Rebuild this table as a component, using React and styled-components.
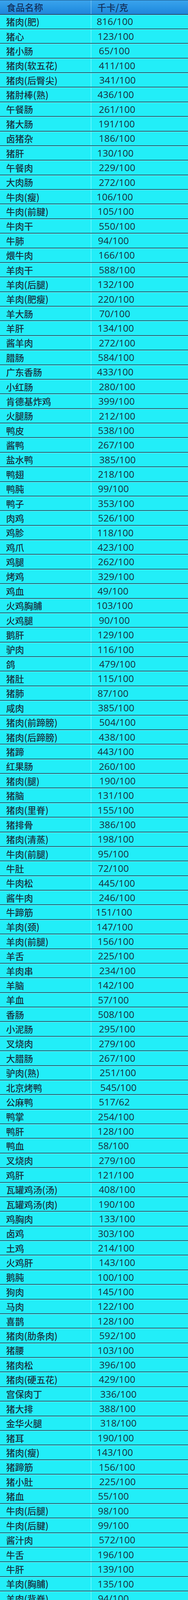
import React from "react";
import styled, { createGlobalStyle } from "styled-components";

const Global = createGlobalStyle`
  html, body { margin: 0; padding: 0; background: #22eef8; }
  body { font-family: "Noto Sans CJK SC", "Noto Sans", sans-serif; }
`;

const DATA = `猪肉(肥)|816/100|745
猪心|123/100|755
猪小肠|65/100|762
猪肉(软五花)|411/100|762
猪肉(后臀尖)|341/100|765
猪肘棒(熟)|436/100|752
午餐肠|261/100|762
猪大肠|191/100|762
卤猪杂|186/100|765
猪肝|130/100|752
午餐肉|229/100|762
大肉肠|272/100|762
牛肉(瘦)|106/100|748
牛肉(前腱)|105/100|755
牛肉干|550/100|762
牛肺|94/100|755
煨牛肉|166/100|762
羊肉干|588/100|762
羊肉(后腿)|132/100|755
羊肉(肥瘦)|220/100|755
羊大肠|70/100|765
羊肝|134/100|755
酱羊肉|272/100|762
腊肠|584/100|755
广东香肠|433/100|748
小红肠|280/100|762
肯德基炸鸡|399/100|758
火腿肠|212/100|762
鸭皮|538/100|755
酱鸭|267/100|755
盐水鸭|385/100|765
鸭翅|218/100|755
鸭肫|99/100|755
鸭子|353/100|755
肉鸡|526/100|755
鸡胗|118/100|752
鸡爪|423/100|752
鸡腿|262/100|755
烤鸡|329/100|755
鸡血|49/100|752
火鸡胸脯|103/100|748
火鸡腿|90/100|762
鹅肝|129/100|755
驴肉|116/100|755
鸽|479/100|765
猪肚|115/100|755
猪肺|87/100|752
咸肉|385/100|755
猪肉(前蹄膀)|504/100|765
猪肉(后蹄膀)|438/100|762
猪蹄|443/100|752
红果肠|260/100|762
猪肉(腿)|190/100|768
猪脑|131/100|755
猪肉(里脊)|155/100|755
猪排骨|386/100|765
猪肉(清蒸)|198/100|755
牛肉(前腿)|95/100|755
牛肚|72/100|755
牛肉松|445/100|760
酱牛肉|246/100|762
牛蹄筋|151/100|742
羊肉(颈)|147/100|748
羊肉(前腿)|156/100|755
羊舌|225/100|755
羊肉串|234/100|765
羊脑|142/100|755
羊血|57/100|755
香肠|508/100|755
小泥肠|295/100|762
叉烧肉|279/100|762
大腊肠|267/100|762
驴肉(熟)|251/100|768
北京烤鸭|545/100|772
公麻鸭|517/62|762
鸭掌|254/100|755
鸭肝|128/100|755
鸭血|58/100|755
叉烧肉|279/100|762
鸡肝|121/100|755
瓦罐鸡汤(汤)|408/100|762
瓦罐鸡汤(肉)|190/100|762
鸡胸肉|133/100|765
卤鸡|303/100|755
土鸡|214/100|755
火鸡肝|143/100|765
鹅肫|100/100|755
狗肉|145/100|755
马肉|122/100|755
喜鹊|128/100|755
猪肉(肋条肉)|592/100|765
猪腰|103/100|755
猪肉松|396/100|765
猪肉(硬五花)|429/100|762
宫保肉丁|336/100|772
猪大排|388/100|765
金华火腿|318/100|772
猪耳|190/100|755
猪肉(瘦)|143/100|748
猪蹄筋|156/100|765
猪小肚|225/100|765
猪血|55/100|755
牛肉(后腿)|98/100|755
牛肉(后腱)|99/100|755
酱汁肉|572/100|762
牛舌|196/100|755
牛肝|139/100|755
羊肉(胸脯)|135/100|755
羊肉(背脊)|94/100|755
羊肾|90/100|755
羊心|113/100|755
腊羊肉|246/100|762
羊肚|87/100|755
腊肉|181/100|755
蒜肠|297/100|755
风干肠|283/100|762
蛋清肠|278/100|762
烧鹅|396/100|755
母麻鸭|615/100|762
北京填鸭|565/100|752
鸭舌|402/100|752
鸭心|143/100|755
鸭肉(胸脯)|90/100|755
酱鸭|333/100|755
母鸡|388/100|755
鸡肉松|440/100|760
鸡翅|281/100|755
鸡心|172/100|755
扒鸡|326/100|755
乌骨鸡|231/100|765
火鸡肫|91/100|762
鹅|389/100|748
野兔肉|84/100|762
酱驴肉|160/100|742
乌鸦|136/100|755`
  .trim()
  .split("\n")
  .map((l) => {
    const [name, kcal, x] = l.split("|");
    return { name, kcal, x: Number(x) };
  });

const Table = styled.div`
  display: flex;
  flex-direction: column;
  width: 480px;
  background: #22eef8;
  color: #18303f;
`;

const HeaderRow = styled.div`
  display: grid;
  grid-template-columns: 233px 1fr;
  flex: none;
  height: 37.5px;
  box-sizing: border-box;
  border-top: 1px solid #1b4f7a;
  border-bottom: 2px solid #174a6c;
  background: linear-gradient(#3aa3ec 0%, #2994e4 55%, #1f86da 100%);
  color: #14305a;
`;

const HeaderCell = styled.div`
  display: flex;
  align-items: center;
  padding-left: ${(p) => p.$pad}px;
  font-size: 23px;
  line-height: 1;
  font-weight: 500;
  letter-spacing: 0.3px;
  ${(p) => (p.$divider ? "border-right: 1px solid rgba(190, 235, 255, 0.7);" : "")}
`;

const Row = styled.div`
  display: grid;
  grid-template-columns: 233px 1fr;
  flex: none;
  height: 37.38px;
  box-sizing: border-box;
  border-top: 1px solid #8ef7fb;
  border-bottom: 2px solid #1d5b6e;
`;

const NameCell = styled.div`
  display: flex;
  align-items: center;
  padding-left: 15.5px;
  font-family: "Noto Sans CJK SC", "Noto Sans", sans-serif;
  font-size: 23px;
  line-height: 1;
  font-weight: 500;
  white-space: nowrap;
  border-right: 1px solid rgba(200, 255, 255, 0.75);
`;

const KcalCell = styled.div`
  display: flex;
  align-items: center;
  padding-left: ${(p) => (p.$x - 700) / 3 - (p.$one ? 2.4 : 1.3)}px;
  font-family: "Open Sans", "Noto Sans", sans-serif;
  font-size: 24.5px;
  line-height: 1;
  font-weight: 500;
  white-space: nowrap;
`;

export default function App() {
  return (
    <>
      <Global />
      <Table>
        <HeaderRow>
          <HeaderCell $pad={17} $divider>食品名称</HeaderCell>
          <HeaderCell $pad={15.5}>千卡/克</HeaderCell>
        </HeaderRow>
        {DATA.map((r, i) => (
          <Row key={i}>
            <NameCell>{r.name}</NameCell>
            <KcalCell $x={r.x} $one={r.kcal[0] === "1"}>
              {r.kcal}
            </KcalCell>
          </Row>
        ))}
      </Table>
    </>
  );
}
